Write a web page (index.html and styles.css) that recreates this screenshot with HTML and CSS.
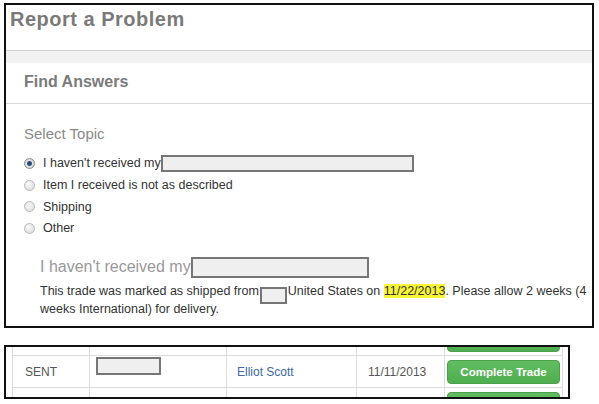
FILE: index.html
```html
<!DOCTYPE html>
<html lang="en">
<head>
  <meta charset="UTF-8">
  <title>Report a Problem</title>
  <link rel="stylesheet" href="styles.css">
</head>
<body>

  <!-- Report panel -->
  <div class="report">
    <h1 class="report-title">Report a Problem</h1>
    <div class="band"></div>
    <h2 class="section-title">Find Answers</h2>

    <div class="topic">
      <h3 class="topic-title">Select Topic</h3>
      <ul class="options">
        <li class="option"><span class="radio checked"></span><span>I haven't received my</span><span class="blank blank-wide"></span></li>
        <li class="option"><span class="radio"></span><span>Item I received is not as described</span></li>
        <li class="option"><span class="radio"></span><span>Shipping</span></li>
        <li class="option"><span class="radio"></span><span>Other</span></li>
      </ul>

      <div class="answer">
        <h4 class="answer-title">I haven't received my<span class="blank blank-title"></span></h4>
        <p class="answer-text">This trade was marked as shipped from<span class="blank blank-small"></span>United States on <mark>11/22/2013</mark>. Please allow 2 weeks (4 weeks International) for delivery.</p>
      </div>
    </div>
  </div>

  <!-- Trades table (cropped) -->
  <div class="trades">
    <table class="trade-table">
      <tr>
        <td class="col-status"></td>
        <td class="col-item"></td>
        <td class="col-user"></td>
        <td class="col-date"></td>
        <td class="col-action"><a class="btn-complete">Complete Trade</a></td>
      </tr>
      <tr>
        <td class="col-status">SENT</td>
        <td class="col-item"><span class="blank blank-item"></span></td>
        <td class="col-user"><a class="user-link">Elliot Scott</a></td>
        <td class="col-date">11/11/2013</td>
        <td class="col-action"><a class="btn-complete">Complete Trade</a></td>
      </tr>
      <tr>
        <td class="col-status"></td>
        <td class="col-item"></td>
        <td class="col-user"></td>
        <td class="col-date"></td>
        <td class="col-action"><a class="btn-complete">Complete Trade</a></td>
      </tr>
    </table>
  </div>

</body>
</html>
```

FILE: styles.css
```css
body {
  margin: 0;
  padding: 0;
  background: #fff;
  font-family: 'Liberation Sans', Arial, sans-serif;
  color: #333;
}

/* Report panel */
.report {
  box-sizing: border-box;
  width: 590px;
  height: 325px;
  margin: 3px 0 0 4px;
  border: 2px solid #111;
  overflow: hidden;
}

.report-title {
  margin: 0;
  padding: 2px 0 19px 4px;
  font-size: 20px;
  line-height: 24px;
  letter-spacing: 0.5px;
  font-weight: bold;
  color: #7a7a7a;
}

.band {
  height: 12px;
  border-top: 1px solid #d2d2d2;
  background: #f2f2f2;
}

.section-title {
  margin: 0;
  padding: 10px 0 12px 18px;
  font-size: 16px;
  line-height: 18px;
  font-weight: bold;
  color: #7a7a7a;
  border-bottom: 1px solid #d8d8d8;
}

/* Topic selection */
.topic {
  padding-left: 18px;
}

.topic-title {
  margin: 21px 0 0;
  font-size: 15px;
  line-height: 18px;
  font-weight: normal;
  color: #8a8a8a;
}

.options {
  list-style: none;
  margin: 9.5px 0 0;
  padding: 0;
}

.option {
  display: flex;
  align-items: center;
  height: 21.7px;
  font-size: 12.5px;
  color: #333;
}

.radio {
  box-sizing: border-box;
  width: 11px;
  height: 11px;
  margin-right: 8px;
  border: 1px solid #b8b8b8;
  border-radius: 50%;
  background: radial-gradient(circle at 40% 35%, #fafafa, #d6d6d6);
}

.radio.checked {
  border-color: #8a8a8a;
  background: radial-gradient(circle, #23466f 0, #2c5282 2px, #e6e6e6 3px, #cfcfcf 5px);
}

.blank {
  display: inline-block;
  box-sizing: border-box;
  border: 2px solid #767676;
  background: #efefef;
}

.blank-wide {
  width: 253px;
  height: 17px;
}

/* Answer block */
.answer {
  padding-left: 16px;
  padding-right: 2px;
}

.answer-title {
  display: flex;
  align-items: center;
  height: 22px;
  margin: 17px 0 0;
  font-size: 16px;
  font-weight: normal;
  color: #999;
}

.blank-title {
  width: 178px;
  height: 21px;
}

.answer-text {
  margin: 4.5px 0 0;
  font-size: 12.5px;
  line-height: 17px;
  color: #333;
}

.blank-small {
  width: 27px;
  height: 17px;
  margin: -3px 1px;
  vertical-align: -6px;
}

.answer-text mark {
  background: #f7f535;
  color: #333;
}

/* Trades table */
.trades {
  box-sizing: border-box;
  width: 566px;
  height: 54px;
  margin: 17px 0 0 4px;
  border: 2px solid #111;
  overflow: hidden;
}

.trade-table {
  border-collapse: collapse;
  margin: -24px 0 0 6px;
  font-size: 12px;
  color: #555;
}

.trade-table td {
  height: 31px;
  padding: 0;
  border: 1px solid #dcdcdc;
  vertical-align: middle;
}

.col-status {
  width: 64px;
  padding-left: 12px !important;
}

.col-item {
  width: 136px;
  vertical-align: top !important;
}

.blank-item {
  width: 65px;
  height: 18px;
  margin: 1px 0 0 6px;
}

.col-user {
  width: 119px;
  padding-left: 10px !important;
}

.user-link {
  color: #3d69a6;
  text-decoration: none;
}

.col-date {
  width: 76px;
  padding-left: 11px !important;
}

.col-action {
  width: 115px;
  padding-left: 2px !important;
}

.btn-complete {
  display: flex;
  align-items: center;
  justify-content: center;
  box-sizing: border-box;
  width: 113px;
  height: 24px;
  border: 1px solid #4aa14a;
  border-radius: 4px;
  background: linear-gradient(#62bd62, #4fae4f);
  color: #fff;
  font-size: 11.5px;
  font-weight: bold;
}
```
